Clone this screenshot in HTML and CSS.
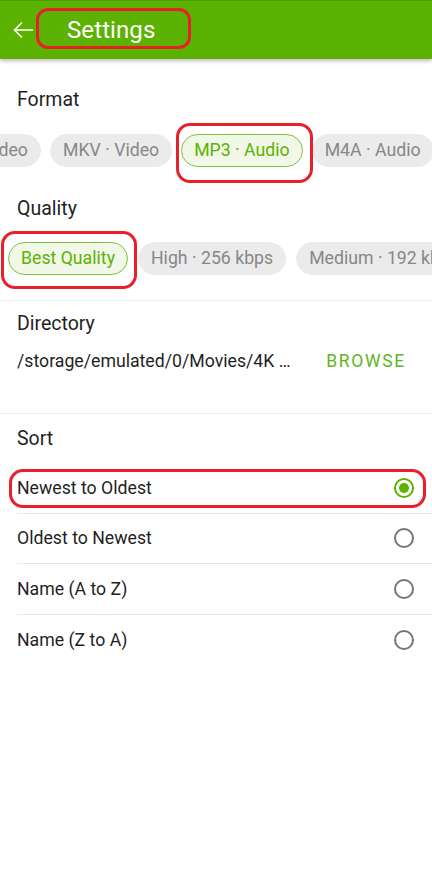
FILE: index.html
```html
<!DOCTYPE html>
<html>
<head>
<meta charset="utf-8">
<link rel="stylesheet" href="styles.css">
</head>
<body>
<div class="app">
  <header class="topbar">
    <svg class="back" width="22" height="22" viewBox="0 0 22 22"><path d="M21 11H2.5M10 3.5L2.5 11l7.5 7.5" fill="none" stroke="#fff" stroke-width="1.6"/></svg>
    <h1 class="title">Settings</h1>
  </header>

  <section class="block">
    <h2 class="label">Format</h2>
    <div class="chips">
      <div class="track track-format">
        <span class="chip">MP4 · Video</span>
        <span class="chip">MKV · Video</span>
        <span class="chip chip-on">MP3 · Audio</span>
        <span class="chip">M4A · Audio</span>
      </div>
    </div>
    <h2 class="label label-q">Quality</h2>
    <div class="chips chips-q">
      <div class="track track-quality">
        <span class="chip chip-on">Best Quality</span>
        <span class="chip">High · 256 kbps</span>
        <span class="chip">Medium · 192 kbps</span>
      </div>
    </div>
  </section>

  <section class="block dir">
    <h2 class="label">Directory</h2>
    <div class="dir-row">
      <span class="path">/storage/emulated/0/Movies/4K …</span>
      <span class="browse">BROWSE</span>
    </div>
  </section>

  <section class="block sort">
    <h2 class="label">Sort</h2>
    <ul class="options">
      <li class="opt"><span>Newest to Oldest</span><span class="radio radio-on"></span></li>
      <li class="opt"><span>Oldest to Newest</span><span class="radio"></span></li>
      <li class="opt"><span>Name (A to Z)</span><span class="radio"></span></li>
      <li class="opt"><span>Name (Z to A)</span><span class="radio"></span></li>
    </ul>
  </section>

  <div class="mark mark-title"></div>
  <div class="mark mark-mp3"></div>
  <div class="mark mark-best"></div>
  <div class="mark mark-newest"></div>
</div>
</body>
</html>
```

FILE: styles.css
```css
* { box-sizing: border-box; }
html, body { margin: 0; padding: 0; background: #fff; }
body { font-family: Roboto, "Noto Sans", sans-serif; color: #1f1f1f; }
.app { position: relative; width: 432px; min-height: 880px; overflow: hidden; }

.topbar {
  height: 59px;
  background: #5cb200;
  border-top: 1px solid #4aa000;
  display: flex;
  align-items: center;
  padding-left: 12px;
  box-shadow: 0 2px 4px rgba(0,0,0,0.25);
  position: relative;
  z-index: 1;
}
.back { display: block; }
.title { margin: 0 0 0 33px; font-size: 24px; font-weight: 400; color: #fff; letter-spacing: 0.1px; }

.block { padding-top: 28px; }
.label { margin: 0 0 0 17px; font-size: 19.5px; font-weight: 400; line-height: 26px; color: #1f1f1f; }
.label-q { margin-top: 29px; }

.chips { overflow: hidden; margin-top: 21px; }
.chips-q { margin-top: 20px; }
.track { display: flex; gap: 9px; white-space: nowrap; }
.track-format { margin-left: -80px; }
.track-quality { margin-left: 8px; gap: 10px; }
.chip {
  flex: none;
  height: 33px;
  line-height: 31px;
  padding: 0 12px;
  border-radius: 17px;
  background: #ebebeb;
  border: 1px solid #ebebeb;
  color: #878787;
  font-size: 17.7px;
}
.chip-on { background: #f1f8e8; border-color: #7cc23a; color: #5cb200; }

.dir { margin-top: 25px; border-top: 1px solid #eeeeee; padding-top: 10px; }
.dir-row { display: flex; align-items: center; margin-top: 12px; padding: 0 26px 0 17px; justify-content: space-between; }
.path { font-size: 17.7px; line-height: 24px; color: #1f1f1f; }
.browse { font-size: 17.5px; color: #62b51c; letter-spacing: 1.7px; }

.sort { margin-top: 40px; border-top: 1px solid #eeeeee; padding-top: 12px; }
.options { list-style: none; margin: 11px 0 0 17px; padding: 0; }
.opt {
  height: 50.5px;
  display: flex;
  align-items: center;
  justify-content: space-between;
  padding-right: 18px;
  font-size: 17.7px;
  color: #1f1f1f;
  border-bottom: 1px solid #e8e8e8;
}
.opt:last-child { border-bottom: none; }
.radio { width: 20px; height: 20px; border: 2px solid #757575; border-radius: 50%; display: block; position: relative; }
.radio-on { border-color: #5cb200; }
.radio-on::after { content: ""; position: absolute; left: 3px; top: 3px; width: 10px; height: 10px; border-radius: 50%; background: #5cb200; }

.mark { position: absolute; border: 3px solid #e8202a; border-radius: 16px; z-index: 2; }
.mark-title { left: 36px; top: 8px; width: 155px; height: 41px; border-radius: 12px; }
.mark-mp3 { left: 176px; top: 123px; width: 137px; height: 60px; border-radius: 14px; }
.mark-best { left: 1px; top: 231px; width: 136px; height: 58px; border-radius: 14px; }
.mark-newest { left: 9px; top: 469px; width: 417px; height: 39px; border-radius: 14px; }
```
